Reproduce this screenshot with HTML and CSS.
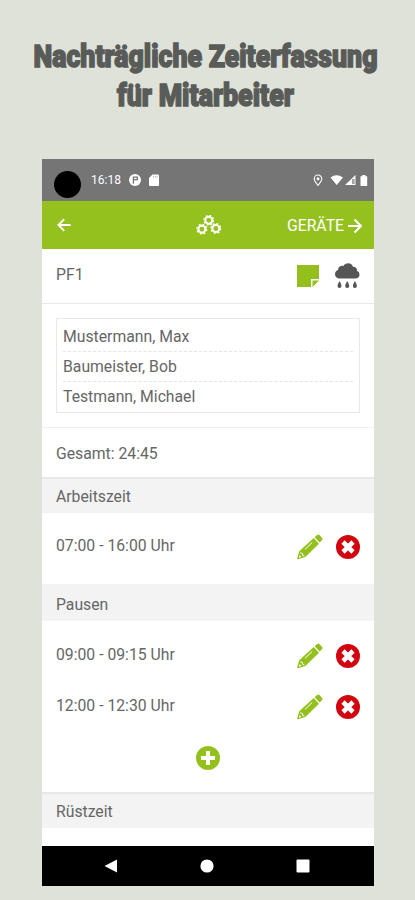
FILE: index.html
```html
<!DOCTYPE html>
<html lang="de">
<head>
<meta charset="utf-8">
<title>Zeiterfassung</title>
<link rel="stylesheet" href="styles.css">
</head>
<body>
<svg width="0" height="0" class="defs">
  <symbol id="pencil" viewBox="0 0 26 26">
    <path fill="#94c01e" d="M17.600 3.200 20.100.9q1.200-1 2.300.1l2.700 2.900q1 1.200-.1 2.300l-2.400 2.300zM16.700 4l5.300 5.800L8.400 23 .8 25.300q-.7.1-.6-.7L2.200 17.200z"/>
    <path fill="none" stroke="#fff" stroke-width="1" d="M8 15.300 15.200 8.500M3.300 18.900l2 .4.500 2.200 1.600.4"/>
    <path fill="#fff" d="m2.500 21 2 2-2.500.8z"/>
  </symbol>
  <symbol id="remove" viewBox="0 0 24 24">
    <circle cx="12" cy="12" r="12" fill="#d2050f"/>
    <path stroke="#fff" stroke-width="4.600" d="m7 7 10 10M17 7 7 17"/>
  </symbol>
  <symbol id="gear" viewBox="0 0 12 12">
    <circle cx="6" cy="6" r="3.600" fill="none" stroke="#fff" stroke-width="2.100"/>
    <circle cx="6" cy="6" r="5" fill="none" stroke="#fff" stroke-width="1.400" stroke-dasharray="1.960 1.967"/>
  </symbol>
</svg>
<h1 class="title">
  <svg width="415" height="80" viewBox="0 0 415 80">
    <text x="33.500" y="31.700" textLength="344" lengthAdjust="spacingAndGlyphs">Nachträgliche Zeiterfassung</text>
    <text x="117" y="71" textLength="177" lengthAdjust="spacingAndGlyphs">für Mitarbeiter</text>
  </svg>
</h1>
<main class="phone">
  <div class="status">
    <span class="camera"></span>
    <span class="clock">16:18</span>
    <svg class="app" width="12" height="12" viewBox="0 0 12 12"><circle cx="6" cy="6" r="6" fill="#fff"/><path d="M4.400 9.800V3.200h4v2.500H4.800" fill="none" stroke="#757575" stroke-width="1.300"/></svg>
    <svg class="sd" width="10" height="12" viewBox="0 0 10 12"><path fill="#fff" d="M3.500.5H9q1 0 1 1V11q0 1-1 1H1q-1 0-1-1V4z"/><path stroke="#757575" stroke-width=".5" d="M4.500 2v1.500M6.300 2v1.500M8.100 2v1.500"/></svg>
    <svg class="signals" width="56" height="13" viewBox="0 0 56 13">
      <path fill="none" stroke="#fff" stroke-width="1.100" d="M5 11.500Q1.200 7 1.200 4.800a3.800 3.800 0 0 1 7.600 0Q8.800 7 5 11.500z"/><circle cx="5" cy="4.800" r="1.500" fill="#fff"/>
      <path fill="#fff" d="M17.500 3.500q6-4.500 12.500 0L23.700 11zM42.500 1v10H32z"/><path fill="#757575" d="M39 5h2.700v5H39z" opacity=".65"/>
      <path fill="#fff" d="M47.500 2.200h1.700V1h3.200v1.200h1.800V12h-6.700z"/>
    </svg>
  </div>
  <header class="bar">
    <svg class="back" width="14" height="14" viewBox="0 0 14 14"><path fill="none" stroke="#fff" stroke-width="1.900" d="M13.600 7H1.500M7.200 1.200 1.400 7l5.800 5.800"/></svg>
    <svg class="gears" width="26" height="20" viewBox="0 0 26 20"><use href="#gear" x="7" y="-.5" width="11.500" height="11.500"/><use href="#gear" x="0" y="8.300" width="11.700" height="11.700"/><use href="#gear" x="14" y="7.600" width="11.700" height="11.700"/></svg>
    <span class="next">GERÄTE<svg width="14" height="16" viewBox="0 0 14 16"><path fill="none" stroke="#fff" stroke-width="2" d="M0 8h12.500M6.500 1.500 13 8l-6.500 6.500"/></svg></span>
  </header>
  <section class="row project">
    <span>PF1</span>
    <svg class="note" width="22" height="22" viewBox="0 0 22 22"><path fill="#94c01e" d="M0 0h22v14h-8v8H0zM15.500 15.500H22L15.500 22z"/></svg>
    <svg class="rain" width="25" height="26" viewBox="0 0 25 26"><path fill="#555" d="M5 15.500C1.800 15.500 0 13.600 0 11.200 0 9 1.300 7.500 3 7 3 3.800 6.300 2.200 8.500 3 10-.5 16.500-1.200 18 3.700q4 .1 4 4.100Q24.500 9 24.500 11.500q0 4-4.500 4z"/><path fill="#555" d="M4.500 18q2 3.300 2 4.900a2 2 0 0 1-4 0q0-1.600 2-4.900zm7.700 0q2 3.300 2 4.900a2 2 0 0 1-4 0q0-1.600 2-4.900zm7.700 0q2 3.300 2 4.900a2 2 0 0 1-4 0q0-1.600 2-4.900z"/></svg>
  </section>
  <section class="people">
    <ul><li>Mustermann, Max</li><li>Baumeister, Bob</li><li>Testmann, Michael</li></ul>
  </section>
  <section class="row total">Gesamt: 24:45</section>
  <h2 class="lined">Arbeitszeit</h2>
  <div class="row work"><span>07:00 - 16:00 Uhr</span><svg class="edit"><use href="#pencil"/></svg><svg class="del"><use href="#remove"/></svg></div>
  <h2 class="breaks">Pausen</h2>
  <div class="pauses">
    <div class="row pause"><span>09:00 - 09:15 Uhr</span><svg class="edit"><use href="#pencil"/></svg><svg class="del"><use href="#remove"/></svg></div>
    <div class="row pause"><span>12:00 - 12:30 Uhr</span><svg class="edit"><use href="#pencil"/></svg><svg class="del"><use href="#remove"/></svg></div>
    <div class="add"><svg width="24" height="24" viewBox="0 0 24 24"><circle cx="12" cy="12" r="12" fill="#94c01e"/><path stroke="#fff" stroke-width="4" d="M12 5v14M5 12h14"/></svg></div>
  </div>
  <h2 class="lined">Rüstzeit</h2>
  <nav class="nav">
    <svg width="14" height="14" viewBox="0 0 14 14"><path fill="#fff" d="M13 .5v13L.5 7z"/></svg>
    <svg width="14" height="14" viewBox="0 0 14 14"><circle cx="7" cy="7" r="6.600" fill="#fff"/></svg>
    <svg width="14" height="14" viewBox="0 0 14 14"><rect x=".5" y=".5" width="13" height="13" rx="1" fill="#fff"/></svg>
  </nav>
</main>
</body>
</html>
```
FILE: styles.css
```css
* { box-sizing: border-box; }
body { margin: 0; height: 900px; overflow: hidden; background: #dfe2d9; font-family: Roboto, "Liberation Sans", sans-serif; font-size: 15.75px; color: #666; }
svg { display: block; flex: none; }
.defs { position: absolute; }
.title { margin: 0; padding-top: 35px; height: 159px; }
.title svg { overflow: visible; }
.title text { font: 900 32px Roboto, sans-serif; fill: #595b58; stroke: #595b58; stroke-width: 1.5px; }
.phone { width: 332px; height: 727px; margin-left: 42px; background: #fff; display: flex; flex-direction: column; }
.status { height: 42px; background: #757575; color: #fff; display: flex; align-items: center; padding: 0 5px 0 12px; flex: none; }
.camera { width: 27px; height: 27px; border-radius: 50%; background: #000; margin-top: 8px; }
.clock { margin-left: 10px; font-size: 12px; width: 38px; }
.app { margin-left: 0; }
.sd { margin-left: 8px; }
.signals { margin-left: auto; }
.bar { height: 48px; flex: none; background: #95c11f; color: #fff; display: grid; grid-template-columns: 1fr 26px 1fr; align-items: center; padding: 0 12px 0 15px; }
.gears { margin-left: -1px; }
.next { display: flex; align-items: center; justify-content: flex-end; gap: 4px; padding-top: 1px; }
.row { display: flex; align-items: center; padding: 0 14px; flex: none; }
.row span { margin-right: auto; }
.project { height: 55px; border-bottom: 1px solid #e9e9e9; }
.project span { padding-bottom: 3px; }
.note { margin-right: 16px; }
.people { height: 124px; flex: none; padding: 14px 14px 0; border-bottom: 1px solid #eee; }
ul { list-style: none; margin: 0; padding: 3px 6px 0; height: 95px; border: 1px solid #e8e8e8; }
li { height: 30px; line-height: 30px; border-bottom: 1px dashed #e4e4e4; }
li:last-child { border: 0; line-height: 29px; }
.total { height: 49px; padding-top: 2px; }
h2 { margin: 0; flex: none; padding-left: 14px; background: #f3f3f3; font-size: inherit; font-weight: 400; }
.lined { border-top: 2px solid #e8e8e8; height: 36px; line-height: 35px; }
.work { height: 71px; padding-bottom: 3px; }
.work span { padding-bottom: 4px; }
.breaks { height: 37px; line-height: 41px; }
.pauses { height: 171px; padding-top: 9px; flex: none; }
.pause { height: 51px; }
.pause span { padding-bottom: 3px; }
.edit { width: 26px; height: 26px; margin-right: 13px; }
.del { width: 24px; height: 24px; }
.add { display: flex; justify-content: center; padding-top: 14px; }
.nav { height: 40px; margin-top: auto; flex: none; background: #000; display: flex; align-items: center; justify-content: space-between; padding: 0 64px 0 62px; }
```
